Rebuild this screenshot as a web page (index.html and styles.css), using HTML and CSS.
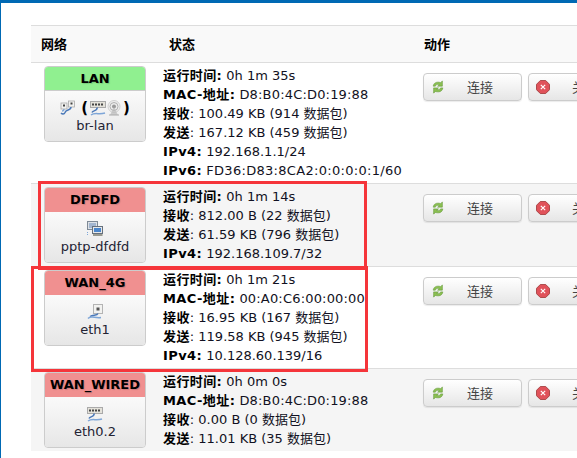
FILE: index.html
```html
<!DOCTYPE html>
<html lang="zh-CN">
<head>
    <meta charset="UTF-8">
    <meta name="viewport" content="width=device-width, initial-scale=1.0">
    <title>网络接口</title>
    <link rel="stylesheet" href="styles.css">
</head>
<body>
    <svg class="defs" width="0" height="0">
        <symbol id="i-eth" viewBox="0 0 16 16">
            <rect x="6.5" y="0.5" width="9" height="9" fill="#f2f2f0" stroke="#b4b4b4"/>
            <rect x="9.500" y="3.500" width="3" height="3" fill="#555"/>
            <path d="M11 9.500C10 12 6 10.500 3 12.500" fill="none" stroke="#4a78b8" stroke-width="1.500"/>
            <path d="M1 14.500C4 11 8 14.500 14 13.500" fill="none" stroke="#7ea6d8" stroke-width="1.500"/>
        </symbol>
        <symbol id="i-switch" viewBox="0 0 16 16">
            <rect x="0.500" y="1.500" width="15" height="6" fill="#e4e2da" stroke="#aaa"/>
            <path d="M2 3.500h2v2h-2zM5 3.500h2v2h-2zM8 3.500h2v2h-2zM11 3.500h2v2h-2z" fill="#444"/>
            <path d="M7 7.500C8 11 3 10 2 12.500" fill="none" stroke="#4a78b8" stroke-width="1.500"/>
            <path d="M1 15C5 12 9 15 15 13" fill="none" stroke="#7ea6d8" stroke-width="1.500"/>
        </symbol>
        <symbol id="i-bridge" viewBox="0 0 16 16">
            <rect x="1" y="3" width="6" height="6" fill="#f2f2f0" stroke="#aaa" stroke-width="0.800"/>
            <rect x="8.500" y="1" width="6" height="6" fill="#f2f2f0" stroke="#aaa" stroke-width="0.800"/>
            <path d="M3 4.500h2v2h-2zM10.500 2.500h2v2h-2z" fill="#444"/>
            <path d="M11 7C11 11 6 9 5 12.500C4 15 2 14 1 13" fill="none" stroke="#4a78b8" stroke-width="1.500"/>
            <path d="M4 9C4 10 3 11 2 11" fill="none" stroke="#7ea6d8" stroke-width="1.300"/>
        </symbol>
        <symbol id="i-wifi" viewBox="0 0 16 16">
            <circle cx="8" cy="6.500" r="6" fill="#eee" stroke="#d0d0d0"/>
            <circle cx="8" cy="6.500" r="4" fill="none" stroke="#b0b0b0"/>
            <circle cx="8" cy="6.500" r="2" fill="#999"/>
            <path d="M8 7L4 15h8z" fill="#bbb" opacity="0.700"/>
            <path d="M3 15h10" stroke="#aaa"/>
        </symbol>
        <symbol id="i-vpn" viewBox="0 0 16 16">
            <rect x="0.500" y="0.500" width="10" height="8" fill="#dde1e6" stroke="#7f8a96"/>
            <rect x="2" y="2" width="7" height="5" fill="#a3b6d0"/>
            <rect x="5.500" y="5.500" width="10" height="7" fill="#e6e8ea" stroke="#66707c"/>
            <rect x="7" y="7" width="7" height="4" fill="#4a86cc"/>
            <path d="M6 14h9.500" stroke="#9a9a90" stroke-width="2"/>
            <path d="M0.500 11v4" stroke="#7ea6d8" stroke-dasharray="1 1"/>
        </symbol>
        <symbol id="i-reload" viewBox="0 0 16 16">
            <path d="M2.500 7C3 3 7 1.500 11 3L13 1v6H7.500l2-1.700C7.500 4.500 5.500 5 5 7z" fill="#8cc052" stroke="#5a9130" stroke-width="0.600"/>
            <path d="M13.500 9C13 13 9 14.500 5 13L3 15V9h5.500l-2 1.700C8.500 11.500 10.500 11 11 9z" fill="#8cc052" stroke="#5a9130" stroke-width="0.600"/>
        </symbol>
        <symbol id="i-stop" viewBox="0 0 16 16">
            <path d="M5 0.500h6L15.500 5v6L11 15.500H5L0.500 11V5z" fill="#e0525a" stroke="#a03a3a"/>
            <path d="M5.500 5.500l5 5M10.500 5.500l-5 5" stroke="#fff" stroke-width="1.300"/>
        </symbol>
    </svg>

    <div class="page">
        <div class="net-table">
            <div class="head-row">
                <div>网络</div>
                <div>状态</div>
                <div>动作</div>
            </div>

            <div class="row">
                <div class="card">
                    <div class="card-title up">LAN</div>
                    <div class="card-body">
                        <div class="card-icons">
                            <svg class="icon"><use href="#i-bridge"/></svg>
                            <span class="paren paren-open">(</span>
                            <svg class="icon"><use href="#i-switch"/></svg>
                            <svg class="icon"><use href="#i-wifi"/></svg>
                            <span class="paren paren-close">)</span>
                        </div>
                        <div>br-lan</div>
                    </div>
                </div>
                <div class="status">
                    <div><b>运行时间:</b> 0h 1m 35s</div>
                    <div><b>MAC-地址:</b> <span class="mac">D8:B0:4C:D0:19:88</span></div>
                    <div><b>接收</b>: 100.49 KB (914 数据包)</div>
                    <div><b>发送</b>: 167.12 KB (459 数据包)</div>
                    <div><b>IPv4:</b> 192.168.1.1/24</div>
                    <div><b>IPv6:</b> <span class="ip6">FD36:D83:8CA2:0:0:0:0:1/60</span></div>
                </div>
                <div class="actions">
                    <button class="btn"><svg class="btn-icon"><use href="#i-reload"/></svg><span>连接</span></button>
                    <button class="btn"><svg class="btn-icon"><use href="#i-stop"/></svg><span>关闭</span></button>
                </div>
            </div>

            <div class="row">
                <div class="card">
                    <div class="card-title down">DFDFD</div>
                    <div class="card-body">
                        <div class="card-icons"><svg class="icon"><use href="#i-vpn"/></svg></div>
                        <div>pptp-dfdfd</div>
                    </div>
                </div>
                <div class="status">
                    <div><b>运行时间:</b> 0h 1m 14s</div>
                    <div><b>接收</b>: 812.00 B (22 数据包)</div>
                    <div><b>发送</b>: 61.59 KB (796 数据包)</div>
                    <div><b>IPv4:</b> 192.168.109.7/32</div>
                </div>
                <div class="actions">
                    <button class="btn"><svg class="btn-icon"><use href="#i-reload"/></svg><span>连接</span></button>
                    <button class="btn"><svg class="btn-icon"><use href="#i-stop"/></svg><span>关闭</span></button>
                </div>
            </div>

            <div class="row">
                <div class="card">
                    <div class="card-title down">WAN_4G</div>
                    <div class="card-body">
                        <div class="card-icons"><svg class="icon"><use href="#i-eth"/></svg></div>
                        <div>eth1</div>
                    </div>
                </div>
                <div class="status">
                    <div><b>运行时间:</b> 0h 1m 21s</div>
                    <div><b>MAC-地址:</b> <span class="mac">00:A0:C6:00:00:00</span></div>
                    <div><b>接收</b>: 16.95 KB (167 数据包)</div>
                    <div><b>发送</b>: 119.58 KB (945 数据包)</div>
                    <div><b>IPv4:</b> 10.128.60.139/16</div>
                </div>
                <div class="actions">
                    <button class="btn"><svg class="btn-icon"><use href="#i-reload"/></svg><span>连接</span></button>
                    <button class="btn"><svg class="btn-icon"><use href="#i-stop"/></svg><span>关闭</span></button>
                </div>
            </div>

            <div class="row">
                <div class="card">
                    <div class="card-title down">WAN_WIRED</div>
                    <div class="card-body">
                        <div class="card-icons"><svg class="icon"><use href="#i-switch"/></svg></div>
                        <div>eth0.2</div>
                    </div>
                </div>
                <div class="status">
                    <div><b>运行时间:</b> 0h 0m 0s</div>
                    <div><b>MAC-地址:</b> <span class="mac">D8:B0:4C:D0:19:88</span></div>
                    <div><b>接收</b>: 0.00 B (0 数据包)</div>
                    <div><b>发送</b>: 11.01 KB (35 数据包)</div>
                </div>
                <div class="actions">
                    <button class="btn"><svg class="btn-icon"><use href="#i-reload"/></svg><span>连接</span></button>
                    <button class="btn"><svg class="btn-icon"><use href="#i-stop"/></svg><span>关闭</span></button>
                </div>
            </div>
        </div>

        <!-- красные рамки поверх таблицы -->
        <div class="mark mark-dfdfd"></div>
        <div class="mark mark-wan4g"></div>
    </div>
</body>
</html>
```

FILE: styles.css
```css
html, body {
    margin: 0;
    padding: 0;
    height: 458px;
    overflow: hidden;
    background-color: #ffffff;
}
body {
    font-family: "DejaVu Sans", "Noto Sans CJK SC", sans-serif;
    font-size: 13px;
    line-height: 19px;
    color: #111122;
}
.defs {
    position: absolute;
}
.page {
    position: relative;
    box-sizing: border-box;
    width: 577px;
    height: 458px;
    padding: 22px 0 0 30px;
    border-top: 3px solid #0069b4;
    border-left: 1px solid #0069b4;
    overflow: hidden;
}
.net-table {
    width: 620px;
}
.head-row {
    display: grid;
    grid-template-columns: 128px 254px 1fr;
    box-sizing: border-box;
    height: 38px;
    align-items: center;
    background-color: #f9f9f9;
    border-top: 1px solid #dddddd;
    border-bottom: 1px solid #dddddd;
    font-weight: bold;
    color: #000000;
}
.head-row div {
    padding-left: 10px;
}
.head-row div:last-child {
    padding-left: 11px;
}
.row {
    display: grid;
    grid-template-columns: 129px 254px 1fr;
    padding: 3px 0;
    border-bottom: 1px solid #dddddd;
    background-color: #ffffff;
}
.row:nth-child(odd) {
    background-color: #f5f5f5;
}
.row:last-child {
    border-bottom: none;
}
.card {
    box-sizing: border-box;
    width: 102px;
    height: 76px;
    margin-left: 13px;
    border: 1px solid #cccccc;
    border-radius: 4px;
    overflow: hidden;
    text-align: center;
    color: #222233;
}
.card-title {
    height: 23px;
    line-height: 23px;
    font-weight: bold;
    color: #000000;
    white-space: nowrap;
    text-shadow: 1px 1px 1px rgba(0, 0, 0, 0.15);
}
.card-title.up {
    background-color: #90f090;
    border-bottom: 1px solid #cccccc;
}
.card-title.down {
    background-color: #f09090;
    border-bottom: 1px solid #f09090;
}
.card-body {
    height: 51px;
    padding-top: 9px;
    box-sizing: border-box;
    background: linear-gradient(#fafafa, #e6e6e6);
}
.card-icons {
    display: flex;
    justify-content: center;
    align-items: center;
    height: 16px;
}
.paren {
    font-weight: bold;
    font-size: 15px;
    color: #000000;
}
.paren-open {
    margin: 0 2px 0 5px;
}
.paren-close {
    margin-left: 1px;
}
.icon {
    width: 16px;
    height: 16px;
    flex: none;
}
.status {
    padding-left: 3px;
    white-space: nowrap;
}
.status b {
    color: #000000;
    letter-spacing: 0.4px;
}
.mac {
    letter-spacing: 0.18px;
}
.ip6 {
    letter-spacing: 0.3px;
}
.actions {
    display: flex;
    gap: 6px;
    padding: 7px 0 0 9px;
    align-items: flex-start;
}
.btn {
    display: flex;
    align-items: center;
    box-sizing: border-box;
    flex: none;
    width: 99px;
    height: 28px;
    padding: 0 0 0 7px;
    border: 1px solid #cccccc;
    border-radius: 4px;
    background: linear-gradient(#ffffff, #e6e6e6);
    box-shadow: 0 1px 1px rgba(0, 0, 0, 0.08);
    font: inherit;
    color: #444444;
}
.btn-icon {
    width: 14px;
    height: 14px;
    flex: none;
}
.btn span {
    flex: 1;
    text-align: center;
    padding-right: 6px;
}
.mark {
    position: absolute;
    box-sizing: border-box;
    border: 3px solid #f5353a;
}
.mark-dfdfd {
    left: 37px;
    top: 178px;
    width: 329px;
    height: 89px;
}
.mark-wan4g {
    left: 30px;
    top: 263px;
    width: 337px;
    height: 106px;
}
```
